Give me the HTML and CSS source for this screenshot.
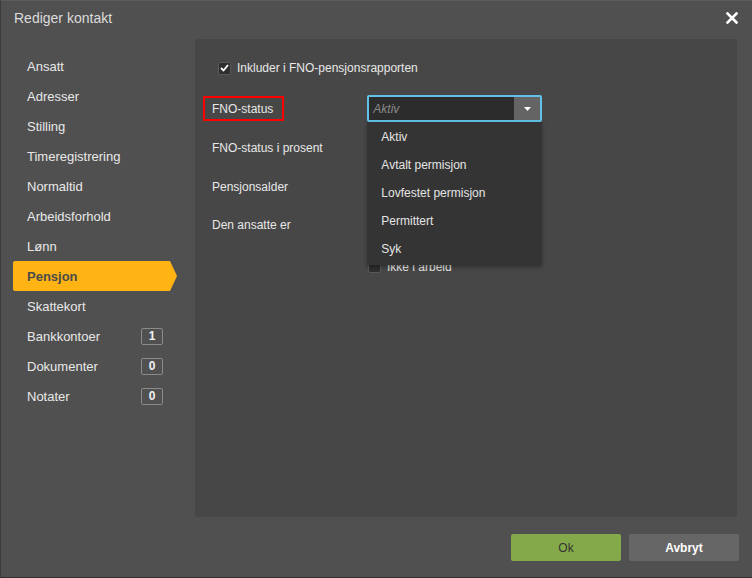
FILE: index.html
```html
<!DOCTYPE html>
<html lang="no">
<head>
    <meta charset="UTF-8">
    <meta name="viewport" content="width=device-width, initial-scale=1.0">
    <title>Rediger kontakt</title>
    <link rel="stylesheet" href="styles.css">
</head>
<body>
    <div class="dialog">
        <div class="dialog-header">
            <span class="dialog-title">Rediger kontakt</span>
            <button class="close-button" title="Lukk">
                <svg width="12" height="12" viewBox="0 0 12 12">
                    <path d="M1.5 1.5 L10.5 10.5 M10.5 1.5 L1.5 10.5" stroke="#fff" stroke-width="2.6" stroke-linecap="square"/>
                </svg>
            </button>
        </div>

        <div class="dialog-body">
            <ul class="side-menu">
                <li class="menu-item">Ansatt</li>
                <li class="menu-item">Adresser</li>
                <li class="menu-item">Stilling</li>
                <li class="menu-item">Timeregistrering</li>
                <li class="menu-item">Normaltid</li>
                <li class="menu-item">Arbeidsforhold</li>
                <li class="menu-item">Lønn</li>
                <li class="menu-item active">Pensjon</li>
                <li class="menu-item">Skattekort</li>
                <li class="menu-item">Bankkontoer <span class="badge">1</span></li>
                <li class="menu-item">Dokumenter <span class="badge">0</span></li>
                <li class="menu-item">Notater <span class="badge">0</span></li>
            </ul>

            <div class="panel">
                <label class="check-row">
                    <span class="checkbox checked">
                        <svg width="9" height="8" viewBox="0 0 9 8"><path d="M1 4 L3.5 6.5 L8 1" fill="none" stroke="#fff" stroke-width="1.8"/></svg>
                    </span>
                    Inkluder i FNO-pensjonsrapporten
                </label>

                <div class="form-row">
                    <span class="form-label highlighted">FNO-status</span>
                    <div class="select-wrap">
                        <div class="select open">
                            <span class="select-value">Aktiv</span>
                            <span class="select-button">
                                <svg width="7" height="4" viewBox="0 0 7 4"><path d="M0 0 H7 L3.5 4 Z" fill="#fff"/></svg>
                            </span>
                        </div>
                        <ul class="dropdown">
                            <li>Aktiv</li>
                            <li>Avtalt permisjon</li>
                            <li>Lovfestet permisjon</li>
                            <li>Permittert</li>
                            <li>Syk</li>
                        </ul>
                    </div>
                </div>

                <div class="form-row">
                    <span class="form-label">FNO-status i prosent</span>
                    <input class="text-input" type="text">
                </div>

                <div class="form-row">
                    <span class="form-label">Pensjonsalder</span>
                    <input class="text-input" type="text">
                </div>

                <div class="form-row top">
                    <span class="form-label">Den ansatte er</span>
                    <div class="option-list">
                        <label class="option"><span class="checkbox"></span>Ikke i arbeid</label>
                    </div>
                </div>
            </div>
        </div>

        <div class="dialog-footer">
            <button class="btn btn-ok">Ok</button>
            <button class="btn btn-cancel">Avbryt</button>
        </div>
    </div>
</body>
</html>
```

FILE: styles.css
```css
/* Oppsett av siden */
body {
    margin: 0;
    font-family: "Liberation Sans", Arial, sans-serif;
    background-color: #2a2a2a;
}

.dialog {
    width: 752px;
    height: 578px;
    box-sizing: border-box;
    background-color: #505050;
    border-left: 1px solid #3c3c3c;
    border-bottom: 1px solid #2f2f2f;
    border-top: 1px solid #5c5c5c;
    display: flex;
    flex-direction: column;
}

/* Tittellinje */
.dialog-header {
    height: 38px;
    display: flex;
    align-items: center;
    justify-content: space-between;
    padding: 0 14px 0 13px;
}

.dialog-title {
    color: #dcdcdc;
    font-size: 14px;
    margin-top: -5px;
}

.close-button {
    background: none;
    border: none;
    padding: 0;
    width: 12px;
    height: 12px;
    cursor: pointer;
    margin-top: -4px;
    display: flex;
}

.dialog-body {
    display: flex;
    height: 478px;
}

/* Venstre meny */
.side-menu {
    list-style: none;
    margin: 0;
    padding: 12px 0 0 12px;
    width: 182px;
}

.menu-item {
    height: 30px;
    width: 157px;
    box-sizing: border-box;
    padding: 0 7px 0 14px;
    display: flex;
    align-items: center;
    justify-content: space-between;
    color: #e8e8e8;
    font-size: 13px;
}

.menu-item.active {
    width: 164px;
    background-color: #ffb414;
    color: #4b4b4b;
    font-weight: bold;
    border-radius: 2px 0 0 2px;
    clip-path: polygon(0 0, 157px 0, 100% 50%, 157px 100%, 0 100%);
}

.badge {
    width: 22px;
    height: 17px;
    box-sizing: border-box;
    border: 1px solid #8a8a8a;
    border-radius: 2px;
    font-size: 12px;
    font-weight: bold;
    color: #f2f2f2;
    display: flex;
    align-items: center;
    justify-content: center;
}

/* Innholdspanel */
.panel {
    width: 542px;
    background-color: #474747;
    border-radius: 2px;
    padding: 22px 0 0 17px;
    box-sizing: border-box;
}

.check-row {
    display: flex;
    align-items: center;
    gap: 6px;
    margin-left: 6px;
    color: #e8e8e8;
    font-size: 12px;
    height: 14px;
    margin-bottom: 20px;
}

.checkbox {
    width: 13px;
    height: 13px;
    box-sizing: border-box;
    background-color: #2e2e2e;
    border: 1px solid #595959;
    border-radius: 2px;
    display: flex;
    align-items: center;
    justify-content: center;
}

.form-row {
    display: flex;
    align-items: center;
    height: 27px;
    margin-bottom: 12px;
}

.form-row.top {
    align-items: flex-start;
}

.form-label {
    width: 155px;
    flex-shrink: 0;
    color: #e8e8e8;
    font-size: 12px;
}

.form-row.top .form-label {
    margin-top: 6px;
}

.form-label.highlighted {
    width: auto;
    height: 25px;
    box-sizing: border-box;
    border: 2px solid #ff0000;
    padding: 0 9px 0 7px;
    margin-left: -9px;
    margin-right: 83px;
    display: flex;
    align-items: center;
}

/* Nedtrekksliste */
.select-wrap {
    position: relative;
    width: 175px;
}

.select {
    height: 27px;
    box-sizing: border-box;
    border: 2px solid #5fc2e6;
    border-radius: 2px;
    background-color: #2c2c2c;
    display: flex;
}

.select-value {
    flex: 1;
    color: #8a8a8a;
    font-style: italic;
    font-size: 12px;
    padding-left: 4px;
    display: flex;
    align-items: center;
}

.select-button {
    width: 26px;
    background-color: #646464;
    display: flex;
    align-items: center;
    justify-content: center;
}

.dropdown {
    position: absolute;
    top: 27px;
    left: 0;
    width: 175px;
    margin: 0;
    padding: 1px 0 2px;
    list-style: none;
    background-color: #343434;
    box-shadow: 0 2px 4px rgba(0, 0, 0, 0.35);
    z-index: 2;
}

.dropdown li {
    height: 28px;
    padding-left: 14px;
    display: flex;
    align-items: center;
    color: #e4e4e4;
    font-size: 12px;
}

.text-input {
    width: 175px;
    height: 27px;
    box-sizing: border-box;
    background-color: #2c2c2c;
    border: 1px solid #5a5a5a;
    color: #e8e8e8;
    font-family: inherit;
    font-size: 12px;
}

.option-list {
    display: flex;
    flex-direction: column;
    padding-top: 48px;
}

.option {
    display: flex;
    align-items: center;
    gap: 6px;
    color: #e8e8e8;
    font-size: 12px;
    height: 13px;
    margin-left: 1px;
}

/* Knapper nederst */
.dialog-footer {
    flex: 1;
    display: flex;
    justify-content: flex-end;
    align-items: flex-start;
    gap: 8px;
    padding: 17px 13px 0 0;
}

.btn {
    width: 110px;
    height: 27px;
    border: none;
    border-radius: 2px;
    font-family: inherit;
    font-size: 12px;
    cursor: pointer;
}

.btn-ok {
    background-color: #84a94a;
    color: #333;
}

.btn-cancel {
    background-color: #666666;
    color: #fff;
    font-weight: bold;
}
```
